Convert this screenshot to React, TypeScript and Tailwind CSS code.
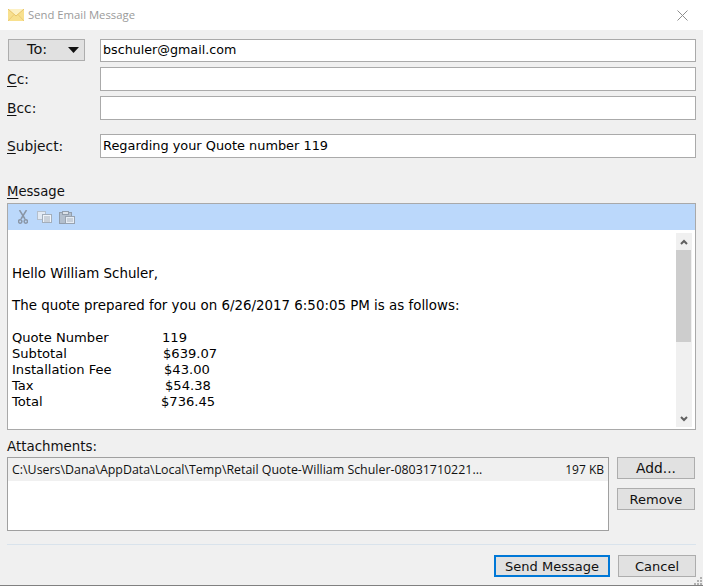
const Field = ({ value = "", className = "" }: { value?: string; className?: string }) => (
  <div className={`flex-1 border border-[#aaaaaa] bg-white pl-[2px] text-black ${className}`}>{value}</div>
);

const Label = ({ k, rest, className = "" }: { k: string; rest: string; className?: string }) => (
  <span className={`w-[93px] shrink-0 text-[13.8px] text-[#111] ${className}`}>
    <span className="underline underline-offset-2">{k}</span>
    {rest}
  </span>
);

const Btn = ({ children, className = "" }: { children: React.ReactNode; className?: string }) => (
  <div className={`flex h-[22px] items-center bg-[#e1e1e1] text-[#111] ${className}`}>{children}</div>
);

const lines = [
  "Hello William Schuler,",
  "",
  "The quote prepared for you on 6/26/2017 6:50:05 PM is as follows:",
  "",
];
const rows: [string, string, number][] = [
  ["Quote Number", "119", 150],
  ["Subtotal", "$639.07", 151],
  ["Installation Fee", "$43.00", 152],
  ["Tax", "$54.38", 153],
  ["Total", "$736.45", 149],
];

export default function App() {
  return (
    <div className="relative flex h-[586px] w-[703px] flex-col overflow-hidden bg-[#f0f0f0] font-['DejaVu_Sans',sans-serif]">
      <div className="flex h-[30px] shrink-0 items-center justify-between bg-white pl-2 pr-[15px]">
        <div className="flex items-center gap-[4px]">
          <svg width="16" height="12" viewBox="0 0 16 12">
            <rect width="16" height="12" fill="#f8e08e" />
            <path d="M0 0 L8 7 L16 0 Z" fill="#fdf1c4" />
            <path d="M0 12 L6 5.5 M16 12 L10 5.5" fill="none" stroke="#eccb74" />
            <path d="M0 0 L8 7 L16 0" fill="none" stroke="#e8c468" />
          </svg>
          <span className="font-['Open_Sans',sans-serif] text-[11.3px] text-[#9a9a9a]">Send Email Message</span>
        </div>
        <svg width="11" height="11" viewBox="0 0 11 11" stroke="#8e8e8e" strokeWidth="1">
          <path d="M0.5 0.5 L10.5 10.5 M10.5 0.5 L0.5 10.5" />
        </svg>
      </div>

      <div className="flex flex-1 flex-col pl-[7px] pr-[7px]">
        <div className="mt-[9px] flex items-start">
          <div className="w-[93px] shrink-0 pl-px">
            <Btn className="w-[77px] border border-[#adadad] pl-[18px] text-[14.5px]">
              <span>To:</span>
              <svg width="11" height="6" viewBox="0 0 11 6" className="ml-[21px]"><path d="M0 0 H11 L5.5 6 Z" fill="#111" /></svg>
            </Btn>
          </div>
          <Field value="bschuler@gmail.com" className="h-[23px] text-[12.7px] leading-[19px]" />
        </div>
        <div className="mt-[5px] flex items-center"><Label k="C" rest="c:" className="pt-[1px]" /><Field className="h-6" /></div>
        <div className="mt-[5px] flex items-center"><Label k="B" rest="cc:" /><Field className="h-6" /></div>
        <div className="mt-[14px] flex items-center"><Label k="S" rest="ubject:" className="pt-[1px]" /><Field value="Regarding your Quote number 119" className="h-6 text-[12.9px] leading-[21px]" /></div>

        <div className="mt-[25px] h-[17px] text-[13.2px] leading-[17px] text-[#111]"><span className="underline underline-offset-2">M</span>essage</div>

        <div className="mt-[3px] flex h-[227px] flex-col border border-[#a9a9a9] bg-white">
          <div className="flex h-[26px] shrink-0 items-center bg-[#bbd8fb] pl-[10px]">
            <svg width="10" height="14" viewBox="0 0 10 14" fill="none" stroke="#8a96a6" strokeWidth="1.5">
              <path d="M1.5 0 L7 9 M8.5 0 L3 9" />
              <circle cx="2.2" cy="11.5" r="1.7" />
              <circle cx="7.8" cy="11.5" r="1.7" />
            </svg>
            <svg width="15" height="12" viewBox="0 0 15 12" className="ml-[9px]">
              <rect x="0.5" y="0.5" width="8" height="8" fill="#e2eaf4" stroke="#b4bfcc" />
              <rect x="5.5" y="3.5" width="9" height="8" fill="#f0f4f9" stroke="#a3aebb" />
              <path d="M7 6 H13 M7 8 H13 M7 10 H13" stroke="#a3aebb" />
            </svg>
            <svg width="16" height="13" viewBox="0 0 16 13" className="ml-[7px]">
              <rect x="0.5" y="1.5" width="12" height="11" fill="#b3bfcd" stroke="#929eac" />
              <rect x="3.5" y="0.5" width="6" height="3" fill="#dbe1e8" stroke="#929eac" />
              <rect x="6.5" y="5.5" width="9" height="7" fill="#e6edf5" stroke="#98a3b0" />
              <path d="M8 8 H14 M8 10 H14" stroke="#a9b3bf" />
            </svg>
          </div>
          <div className="flex min-h-0 flex-1">
            <div className="flex-1 pl-[4px] pt-[36px] text-[13.4px] leading-[16px] text-black">
              {lines.map((l, i) => (
                <div key={i} className="h-4 whitespace-pre">{l}</div>
              ))}
              {rows.map(([a, b, x]) => (
                <div key={a} className="flex h-4 whitespace-pre text-[13.1px]">
                  <span style={{ width: x }}>{a}</span>
                  <span>{b}</span>
                </div>
              ))}
            </div>
            <div className="mb-[2px] mr-[3px] mt-[3px] flex w-[16px] shrink-0 flex-col bg-[#f0f0f0]">
              <div className="flex h-[17px] items-center justify-center">
                <svg width="8" height="6" viewBox="0 0 8 6" fill="none" stroke="#606060" strokeWidth="2"><path d="M1 5 L4 2 L7 5" /></svg>
              </div>
              <div className="h-[92px] w-[15px] bg-[#cdcdcd]" />
              <div className="flex-1" />
              <div className="flex h-[17px] items-center justify-center">
                <svg width="8" height="6" viewBox="0 0 8 6" fill="none" stroke="#606060" strokeWidth="2"><path d="M1 1 L4 4 L7 1" /></svg>
              </div>
            </div>
          </div>
        </div>

        <div className="mt-[8px] h-[17px] text-[13.4px] leading-[17px] text-[#111]">Attachments:</div>

        <div className="mt-[2px] flex items-start">
          <div className="h-[74px] w-[602px] shrink-0 border border-[#a0a0a0] bg-white">
            <div className="flex h-[23px] items-center justify-between bg-[#f0f0f0] pl-[4px] pr-[4px] pt-px font-['Open_Sans',sans-serif] text-[#111]">
              <span className="text-[12.4px]">C:\Users\Dana\AppData\Local\Temp\Retail Quote-William Schuler-08031710221...</span>
              <span className="text-[12px]">197 KB</span>
            </div>
          </div>
          <div className="ml-[8px] flex flex-col gap-[9px]">
            <Btn className="w-[78px] justify-center border border-[#adadad] text-[13.8px]">Add...</Btn>
            <Btn className="w-[78px] justify-center border border-[#adadad] pt-[2px] text-[13px]">Remove</Btn>
          </div>
        </div>

        <div className="mt-[13px] h-px w-[689px] bg-[#d9e3ec]" />

        <div className="mt-[10px] flex justify-end gap-[8px]">
          <Btn className="w-[116px] justify-center border-2 border-[#0078d7] pt-[2px] text-[13px]">Send Message</Btn>
          <Btn className="w-[78px] justify-center border border-[#adadad] pt-[2px] text-[13px]">Cancel</Btn>
        </div>
      </div>
      <div className="h-px shrink-0 bg-[#808080]" />
      <svg width="10" height="9" viewBox="0 0 10 9" fill="#b0b0b0" className="absolute bottom-0 right-0">
        <rect x="7" y="0" width="2" height="2" />
        <rect x="4" y="3" width="2" height="2" />
        <rect x="7" y="3" width="2" height="2" />
        <rect x="1" y="6" width="2" height="2" />
        <rect x="4" y="6" width="2" height="2" />
        <rect x="7" y="6" width="2" height="2" />
      </svg>
    </div>
  );
}
